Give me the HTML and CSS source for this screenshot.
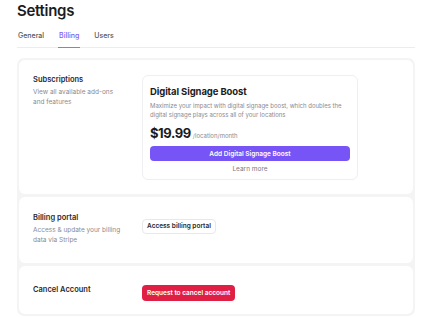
FILE: index.html
```html
<!DOCTYPE html>
<html lang="en">
<head>
    <meta charset="UTF-8">
    <meta name="viewport" content="width=device-width, initial-scale=1.0">
    <title>Settings</title>
    <link rel="stylesheet" href="styles.css">
</head>
<body>
    <div class="page">
        <h1 class="title">Settings</h1>
        <nav class="tabs">
            <a href="#" class="tab">General</a>
            <a href="#" class="tab active">Billing</a>
            <a href="#" class="tab">Users</a>
        </nav>

        <div class="panel">
            <div class="card">
                <div class="label">
                    <h2>Subscriptions</h2>
                    <p>View all available add-ons and features</p>
                </div>
                <div class="boost">
                    <h3>Digital Signage Boost</h3>
                    <p class="boost-desc">Maximize your impact with digital signage boost, which doubles the digital signage plays across all of your locations</p>
                    <div class="price"><span class="amount">$19.99</span> <span class="per">/location/month</span></div>
                    <button class="btn btn-primary">Add Digital Signage Boost</button>
                    <a href="#" class="learn">Learn more</a>
                </div>
            </div>

            <div class="card card-portal">
                <div class="label">
                    <h2>Billing portal</h2>
                    <p>Access &amp; update your billing data via Stripe</p>
                </div>
                <div>
                    <button class="btn btn-outline">Access billing portal</button>
                </div>
            </div>

            <div class="card card-cancel">
                <div class="label">
                    <h2>Cancel Account</h2>
                </div>
                <div>
                    <button class="btn btn-danger">Request to cancel account</button>
                </div>
            </div>
        </div>
    </div>
</body>
</html>
```

FILE: styles.css
```css
body{
    margin:0;
    background:#fff;
    font-family: Inter, 'Noto Sans', sans-serif;
    color:#1c1c1e;
}

.page{
    padding:0 8px 0 17px;
}

.title{
    margin:0;
    padding-top:1px;
    font-size:15px;
    font-weight:600;
    letter-spacing:-0.3px;
    line-height:20px;
}

.tabs{
    display:flex;
    gap:13px;
    margin-top:8px;
    border-bottom:1px solid #ececee;
}

.tab{
    font-size:7px;
    font-weight:500;
    color:#555;
    text-decoration:none;
    padding:2px 1px 7px;
    border-bottom:1.5px solid transparent;
    margin-bottom:-1px;
}

.tab.active{
    color:#7c5cf6;
    border-bottom-color:#8e74f8;
}

.panel{
    margin-top:10px;
    background:#f4f4f5;
    border-radius:7px;
    padding:2px;
    display:flex;
    flex-direction:column;
    gap:3px;
}

.card{
    background:#fff;
    border-radius:6px;
    display:grid;
    grid-template-columns:109px 216px;
    align-items:start;
    padding:15px 14px 14px;
}

.card-portal{
    padding-bottom:18px;
}

.card-cancel{
    padding:13px 14px 13px;
    align-items:center;
}

.label h2{
    margin:0;
    font-size:7.5px;
    font-weight:600;
    color:#2a2a2e;
    line-height:10px;
}

.label p{
    margin:3px 0 0;
    font-size:6.5px;
    color:#8a8a90;
    line-height:9.5px;
    width:90px;
}

.card-portal .label h2{
    margin-top:1px;
}

.boost{
    border:1px solid #efeff1;
    border-radius:6px;
    padding:9px 7px 6px;
    display:flex;
    flex-direction:column;
}

.boost h3{
    margin:0;
    font-size:9.5px;
    font-weight:700;
    letter-spacing:-0.1px;
    line-height:13px;
}

.boost-desc{
    margin:4px 0 0;
    font-size:6px;
    color:#8a8a90;
    line-height:8.5px;
}

.price{
    margin-top:6px;
    display:flex;
    align-items:baseline;
    gap:2px;
}

.amount{
    font-size:13px;
    font-weight:700;
    letter-spacing:-0.4px;
}

.per{
    font-size:6px;
    color:#8a8a90;
}

.btn{
    font-family:inherit;
    font-size:6.5px;
    font-weight:600;
    border-radius:4px;
    cursor:pointer;
}

.btn-primary{
    margin-top:5px;
    background:#7654f6;
    color:#fff;
    border:none;
    height:15px;
    width:100%;
}

.learn{
    text-align:center;
    font-size:6.5px;
    color:#7a7a80;
    text-decoration:none;
    margin-top:4px;
}

.btn-outline{
    background:#fff;
    border:1px solid #e8e8ea;
    color:#2a2a2e;
    height:15px;
    padding:0 4px;
}

.btn-danger{
    background:#df1f44;
    color:#fff;
    border:none;
    height:16px;
    padding:0 5px;
}
```
